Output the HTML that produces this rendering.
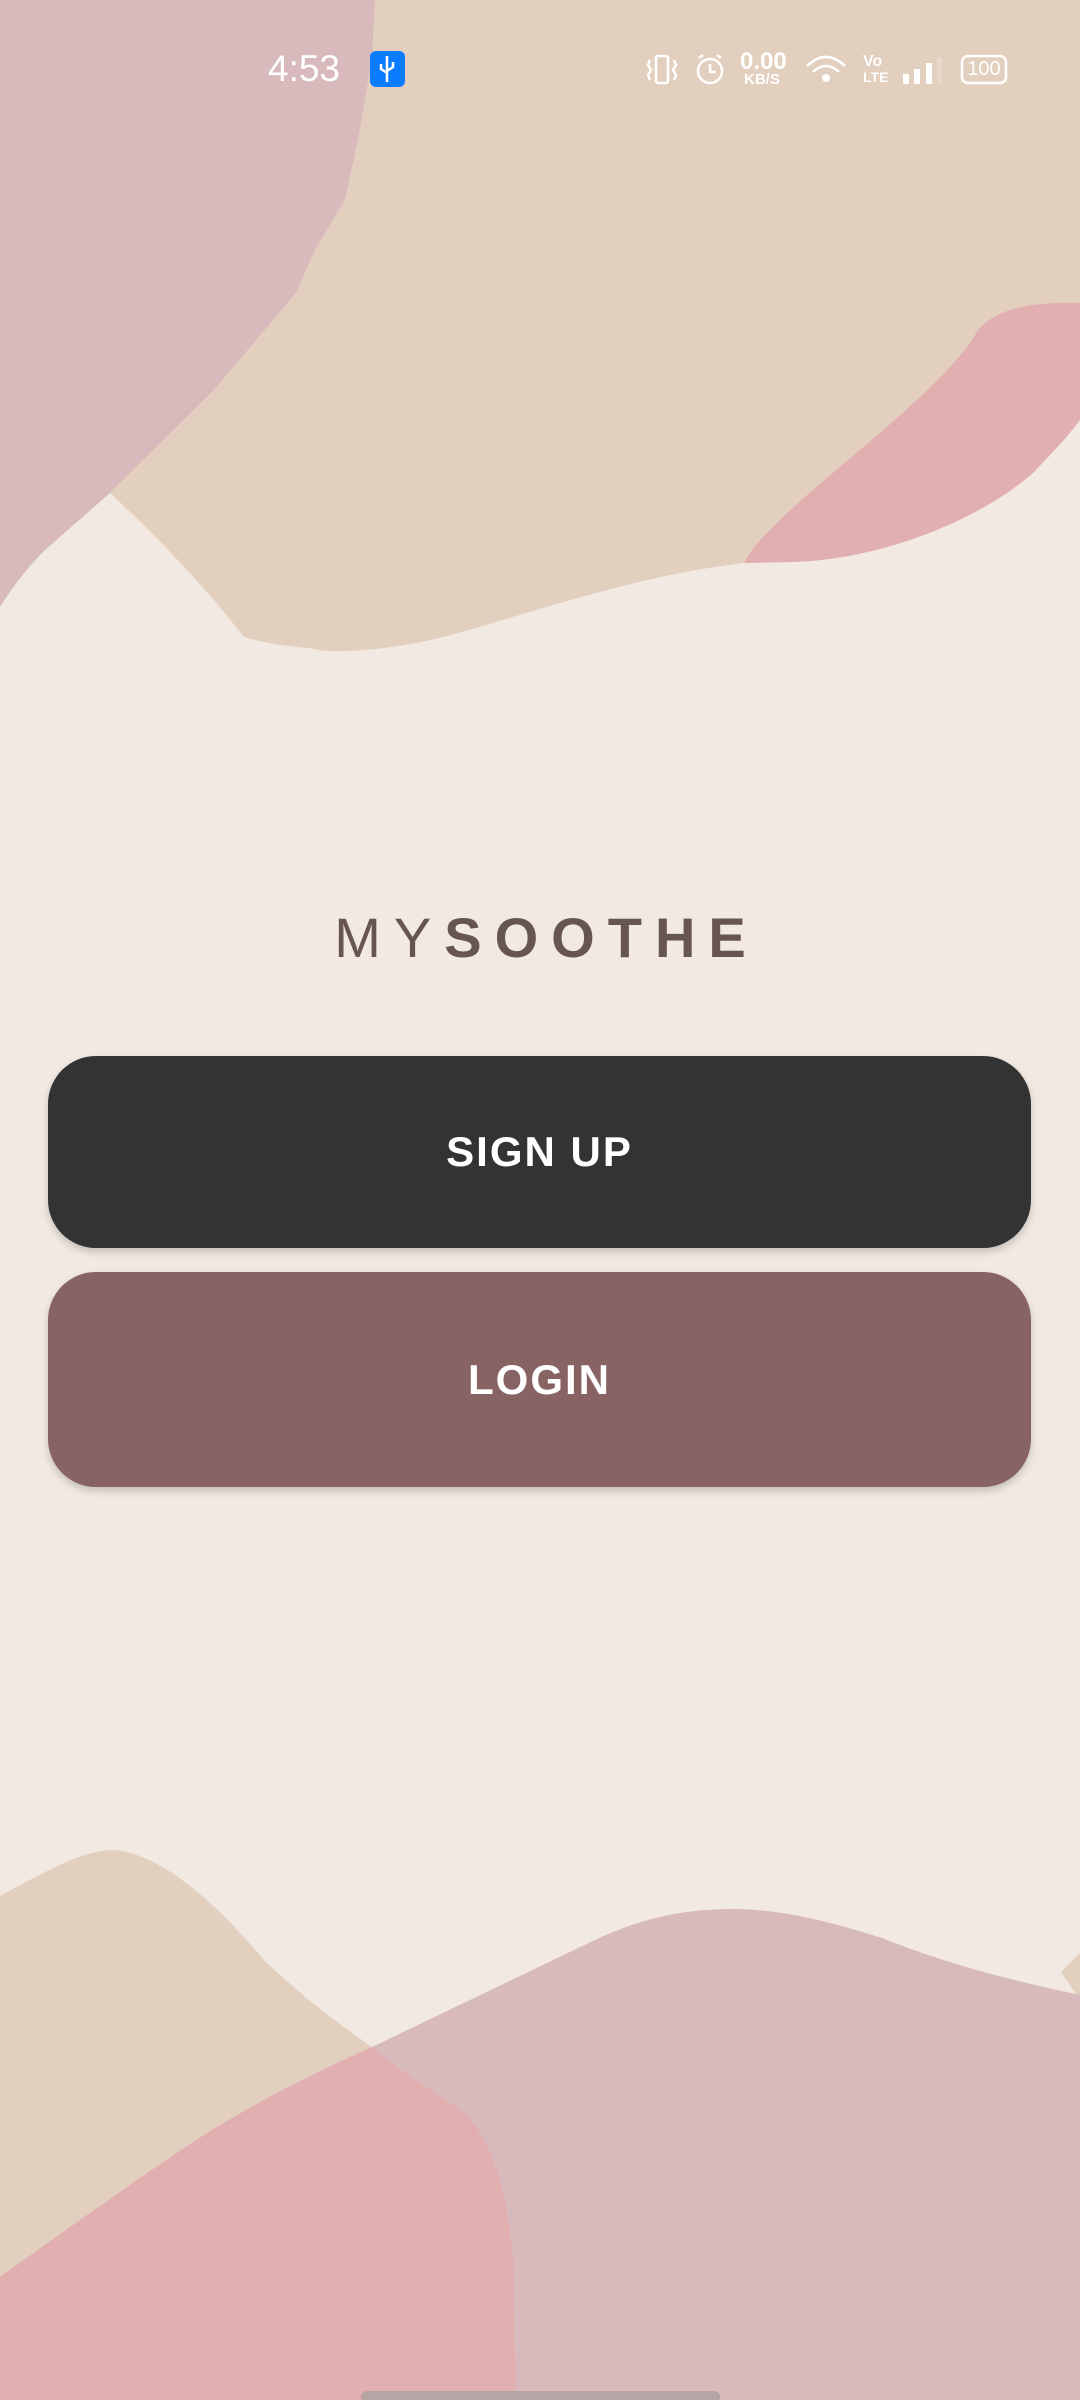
<!DOCTYPE html>
<html><head><meta charset="utf-8"><style>
html,body{margin:0;padding:0}
body{width:1080px;height:2400px;position:relative;overflow:hidden;background:#f1e9e2;font-family:"Liberation Sans",sans-serif}
svg.bg{position:absolute;left:0;top:0}
.title{position:absolute;left:0;width:1080px;top:900px;text-align:center;font-size:56px;color:#665553;letter-spacing:13px;line-height:76px;padding-left:13px;box-sizing:border-box}
.title b{font-weight:bold}
.btn{position:absolute;left:48px;width:983px;border-radius:48px;color:#fff;font-weight:bold;font-size:42px;letter-spacing:2px;display:flex;align-items:center;justify-content:center;box-shadow:0 4px 8px rgba(0,0,0,0.18)}
.st{position:absolute;color:#fff}
</style></head><body>
<svg class="bg" width="1080" height="2400" viewBox="0 0 1080 2400">
<path d="M375,0 H1080 V420 L792,562 L744,563 C640,575 540,610 458,633 C400,650 330,655 310,648 C270,645 255,640 244,637 C200,580 150,530 110,493 L214,390 L296,293 L315,250 L345,200 L358,140 L372,60 Z" fill="#e2cfbe"/>
<path d="M0,0 H375 L372,60 L358,140 L345,200 L315,250 L296,293 L214,390 L110,493 L45,550 C20,575 8,595 0,607 Z" fill="#d8babd"/>
<path d="M1080,303 C1040,302 1000,305 978,330 C940,400 770,510 744,563 L792,562 C880,560 980,520 1033,473 C1050,455 1065,440 1080,420 Z" fill="#e2afb0"/>
<path d="M1061,1972 L1080,1953 V2000 Z" fill="#e2cfbe"/>
<path d="M0,1896 C40,1875 80,1850 114,1850 C170,1855 230,1920 265,1961 C300,1995 340,2025 372,2047 L461,2110 L516,2400 H0 Z" fill="#e2cfbe"/>
<path d="M372,2047 L599,1938 C650,1915 690,1909 737,1909 C790,1910 840,1925 882,1938 C950,1965 1010,1980 1080,1995 V2400 H0 V2277 C80,2220 150,2170 207,2133 Z" fill="#d8babd"/>
<path d="M0,2277 C80,2220 150,2170 207,2133 C260,2100 320,2070 372,2047 C400,2070 430,2090 461,2110 C495,2140 508,2200 513,2259 L516,2400 H0 Z" fill="#e2afb0"/>
<rect x="361" y="2391" width="359" height="12" rx="6" fill="#b5a5a5"/>
<rect x="370" y="51" width="35" height="36" rx="6" fill="#0a7cff"/>
<path d="M387,56 V82 M381,64 V69 L387,73 M393,62 V67 L387,71" stroke="#fff" stroke-width="2.5" fill="none"/>
<g stroke="#fff" stroke-width="2.5" fill="none">
<rect x="656" y="56" width="12" height="27" rx="2"/>
<path d="M650,60 L648,65 L651,70 L648,75 L650,80 M674,60 L676,65 L673,70 L676,75 L674,80"/>
<circle cx="710" cy="71" r="12"/><path d="M710,64 V72 H716 M699,58 L703,55 M721,58 L717,55"/>
<path d="M807,66 Q826,48 845,66 M813,72 Q826,60 839,72"/>
<rect x="962" y="56" width="44" height="27" rx="6"/>
</g>
<circle cx="826" cy="78" r="4" fill="#fff"/>
<g fill="#fff"><rect x="903" y="74" width="6" height="10"/><rect x="914" y="69" width="6" height="15"/><rect x="926" y="63" width="6" height="21"/><rect x="937" y="58" width="5" height="26" fill="#e8d8ca"/></g>
</svg>
<div class="st" style="left:268px;top:48px;font-size:37px;line-height:42px">4:53</div>
<div class="st" style="left:740px;top:49px;font-size:24px;font-weight:bold;line-height:26px">0.00</div>
<div class="st" style="left:744px;top:72px;font-size:15px;font-weight:bold;line-height:16px">KB/S</div>
<div class="st" style="left:863px;top:54px;font-size:16px;font-weight:bold;line-height:16px">Vo</div>
<div class="st" style="left:863px;top:70px;font-size:14px;font-weight:bold;line-height:15px">LTE</div>
<div class="st" style="left:964px;top:56px;font-size:20px;line-height:27px;width:40px;text-align:center">100</div>
<div class="title">MY<b>SOOTHE</b></div>
<div class="btn" style="top:1056px;height:192px;background:#333333">SIGN UP</div>
<div class="btn" style="top:1272px;height:215px;background:#876363">LOGIN</div>
</body></html>
